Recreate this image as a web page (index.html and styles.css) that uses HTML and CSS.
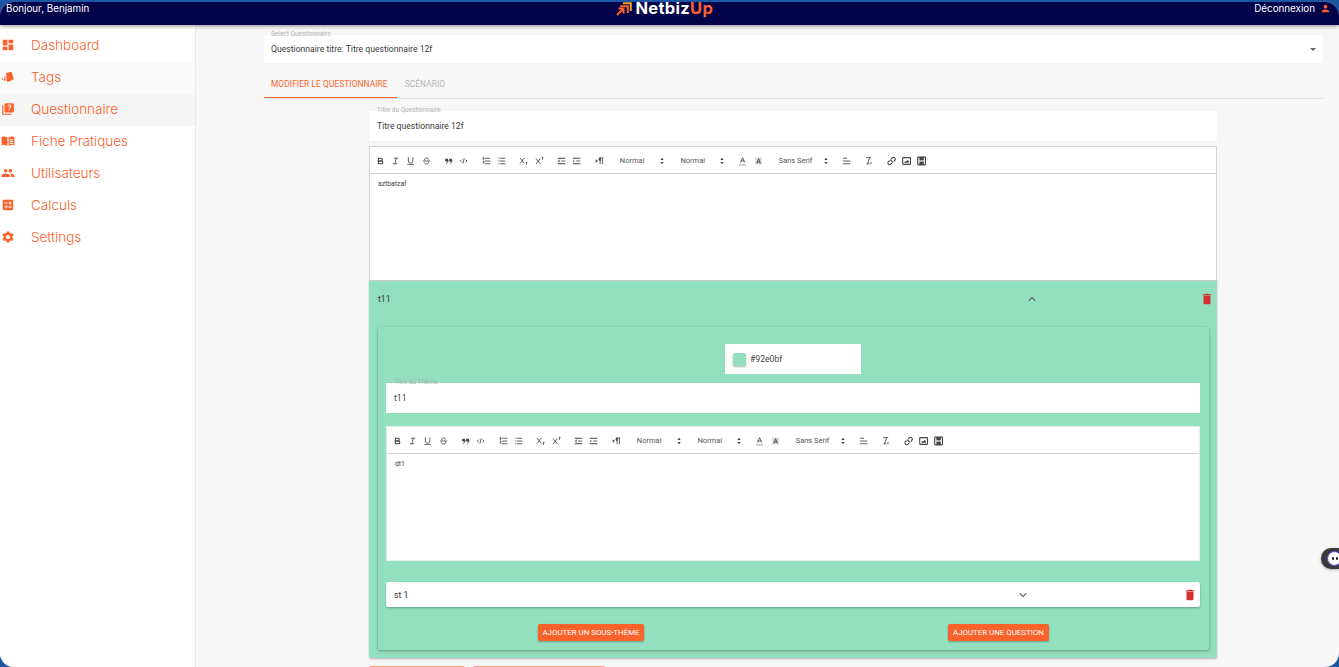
FILE: index.html
```html
<!DOCTYPE html>
<html lang="fr">
<head>
    <meta charset="UTF-8">
    <meta name="viewport" content="width=device-width, initial-scale=1.0">
    <title>NetbizUp</title>
    <link rel="stylesheet" href="styles.css">
</head>
<body>
    <svg class="sprites" width="0" height="0">
        <symbol id="q-bold" viewBox="0 0 18 18"><path class="st w2" d="M5,4H9.5a2.5,2.5,0,0,1,0,5H5V4Z"/><path class="st w2" d="M5,9h5.5a2.5,2.5,0,0,1,0,5H5V9Z"/></symbol>
        <symbol id="q-italic" viewBox="0 0 18 18"><line class="st" x1="7" x2="13" y1="4" y2="4"/><line class="st" x1="5" x2="11" y1="14" y2="14"/><line class="st" x1="8" x2="10" y1="14" y2="4"/></symbol>
        <symbol id="q-underline" viewBox="0 0 18 18"><path class="st" d="M5,3V9a4,4,0,0,0,8,0V3"/><rect class="fl" x="3" y="15" width="12" height="1.4" rx=".5"/></symbol>
        <symbol id="q-strike" viewBox="0 0 18 18"><line class="st" x1="3" x2="15" y1="9" y2="9"/><path class="st" d="M5.5,7C5,4.500,7,3.500,9,3.500c1.800,0,3.300,.8,3.700,2.300"/><path class="st" d="M12.600,11c.5,2.500-1.600,3.500-3.600,3.500-2,0-3.500-.9-3.900-2.400"/></symbol>
        <symbol id="q-quote" viewBox="0 0 18 18"><rect class="fl" x="3" y="5" width="5" height="5"/><rect class="fl" x="10" y="5" width="5" height="5"/><path class="st" d="M8,8c0,3-1,4.500-3,5.500"/><path class="st" d="M15,8c0,3-1,4.500-3,5.500"/></symbol>
        <symbol id="q-code" viewBox="0 0 18 18"><polyline class="st" points="5 7 3 9 5 11"/><polyline class="st" points="13 7 15 9 13 11"/><line class="st" x1="10" x2="8" y1="5" y2="13"/></symbol>
        <symbol id="q-ol" viewBox="0 0 18 18"><line class="st" x1="7" x2="15" y1="4" y2="4"/><line class="st" x1="7" x2="15" y1="9" y2="9"/><line class="st" x1="7" x2="15" y1="14" y2="14"/><line class="st" x1="2.500" x2="4.500" y1="5.500" y2="5.500"/><path class="st" d="M3.500,5.500V2.500H2.500"/><path class="st" d="M2.500,9.500c0-1,2-1,2,0,0,1-2,1.500-2,3h2.200"/></symbol>
        <symbol id="q-ul" viewBox="0 0 18 18"><line class="st" x1="6" x2="15" y1="4" y2="4"/><line class="st" x1="6" x2="15" y1="9" y2="9"/><line class="st" x1="6" x2="15" y1="14" y2="14"/><line class="st" x1="3" x2="3" y1="4" y2="4"/><line class="st" x1="3" x2="3" y1="9" y2="9"/><line class="st" x1="3" x2="3" y1="14" y2="14"/></symbol>
        <symbol id="q-sub" viewBox="0 0 18 18"><path class="st" d="M3,4l7,9M10,4l-7,9"/><path class="fl" d="M13,11h3v1.200h-1v3.800h-1.200v-3.800H13z"/></symbol>
        <symbol id="q-sup" viewBox="0 0 18 18"><path class="st" d="M3,5l7,9M10,5l-7,9"/><path class="fl" d="M13,2h3v1.200h-1v3.800h-1.200v-3.800H13z"/></symbol>
        <symbol id="q-outdent" viewBox="0 0 18 18"><line class="st w2" x1="3" x2="15" y1="14" y2="14"/><line class="st w2" x1="3" x2="15" y1="4" y2="4"/><line class="st" x1="9" x2="15" y1="9" y2="9"/><polyline class="st" points="6 7 3 9 6 11"/></symbol>
        <symbol id="q-indent" viewBox="0 0 18 18"><line class="st w2" x1="3" x2="15" y1="14" y2="14"/><line class="st w2" x1="3" x2="15" y1="4" y2="4"/><line class="st" x1="9" x2="15" y1="9" y2="9"/><polyline class="fl" points="3 7 3 11 6 9"/></symbol>
        <symbol id="q-rtl" viewBox="0 0 18 18"><polygon class="fl" points="2 6 2 12 6 9"/><line class="st" x1="10" x2="10" y1="4" y2="14"/><line class="st" x1="14" x2="14" y1="4" y2="14"/><path class="fl" d="M14,3H10A3,3,0,0,0,10,9h1V3z"/><line class="st" x1="9" x2="15" y1="3.500" y2="3.500"/></symbol>
        <symbol id="q-arrows" viewBox="0 0 18 18"><polygon class="fl" points="6 11 9 15 12 11"/><polygon class="fl" points="6 7 9 3 12 7"/></symbol>
        <symbol id="q-color" viewBox="0 0 18 18"><polyline class="st" points="5.500 11 9 3 12.500 11"/><line class="st" x1="11.600" x2="6.400" y1="9" y2="9"/><rect class="lt" x="3" y="15" width="12" height="2"/></symbol>
        <symbol id="q-background" viewBox="0 0 18 18"><rect class="lt" x="3" y="3" width="12" height="12" opacity=".5"/><polyline class="st" points="6 13 9 5 12 13"/><line class="st" x1="7" x2="11" y1="10.500" y2="10.500"/></symbol>
        <symbol id="q-align" viewBox="0 0 18 18"><line class="st" x1="3" x2="15" y1="9" y2="9"/><line class="st" x1="3" x2="15" y1="14" y2="14"/><line class="st" x1="3" x2="9" y1="4" y2="4"/></symbol>
        <symbol id="q-clean" viewBox="0 0 18 18"><line class="st" x1="5" x2="13" y1="3" y2="3"/><line class="st" x1="6" x2="9.400" y1="14" y2="14"/><line class="st" x1="11" x2="7" y1="3" y2="14"/><line class="lt-st" x1="11" x2="15" y1="11" y2="15"/><line class="lt-st" x1="15" x2="11" y1="11" y2="15"/></symbol>
        <symbol id="q-link" viewBox="0 0 18 18"><line class="st w2" x1="7" x2="11" y1="7" y2="11"/><path class="st w2" d="M8.900,4.600,10.300,3.200a2.900,2.900,0,0,1,4.300,.2,2.900,2.900,0,0,1,.2,4.300L13.400,9.100"/><path class="st w2" d="M9.100,13.400,7.700,14.800a2.900,2.900,0,0,1-4.300-.2,2.900,2.900,0,0,1-.2-4.300L4.600,8.900"/></symbol>
        <symbol id="q-image" viewBox="0 0 18 18"><rect class="st w2" x="2" y="3" width="14" height="12" rx="1"/><polyline class="fl" points="5 12 5 11 7 9 8 10 11 7 13 9 13 12 5 12"/></symbol>
        <symbol id="q-video" viewBox="0 0 18 18"><rect class="st w2" x="2" y="2" width="14" height="14" rx="1"/><rect class="fl" x="5" y="2" width="8" height="6"/><rect class="fl" x="5" y="10" width="8" height="6"/></symbol>
        <symbol id="m-delete" viewBox="0 0 24 24"><path d="M6 19c0 1.100.9 2 2 2h8c1.100 0 2-.9 2-2V7H6v12zM19 4h-3.500l-1-1h-5l-1 1H5v2h14V4z"/></symbol>
    </svg>

    <div class="app">
        <header class="topbar">
            <span class="topbar-text">Bonjour, Benjamin</span>
            <div class="logo">
                <svg class="logo-mark" viewBox="0 0 16 14"><path d="M7 1.200h7.800V9" fill="none" stroke="#f2a41f" stroke-width="2"/><path d="M4 4.200h7.800V11" fill="none" stroke="#f9622b" stroke-width="2"/><path d="M1 13l6.500-6.500M2.500 6.500h5v5" fill="none" stroke="#f9622b" stroke-width="2"/></svg>
                <span class="logo-text">Netbiz<span class="logo-up">Up</span></span>
            </div>
            <div class="logout">
                <span class="topbar-text">Déconnexion</span>
                <svg class="logout-icon" viewBox="0 0 24 24"><path d="M12 12c2.210 0 4-1.790 4-4s-1.790-4-4-4-4 1.790-4 4 1.790 4 4 4zm0 2c-2.670 0-8 1.340-8 4v2h16v-2c0-2.660-5.330-4-8-4z"/></svg>
            </div>
        </header>

        <div class="layout">
            <nav class="sidebar">
                <a class="nav-item">
                    <svg class="nav-icon" viewBox="0 0 24 24"><path d="M3 13h8V3H3v10zm0 8h8v-6H3v6zm10 0h8V11h-8v10zm0-18v6h8V3h-8z"/></svg>
                    Dashboard
                </a>
                <a class="nav-item nav-hover">
                    <svg class="nav-icon" viewBox="0 0 24 24"><path d="M9 5l9-2 4 13-9 4c-2 .5-3-.5-3.500-2z"/><path d="M7 8l1 11-3-1zM3 12l1.500 6L2 16.500z"/></svg>
                    Tags
                </a>
                <a class="nav-item nav-active">
                    <svg class="nav-icon" viewBox="0 0 24 24"><path fill-rule="evenodd" d="M4 6H2v14c0 1.100.9 2 2 2h14v-2H4V6zm16-4H8c-1.100 0-2 .9-2 2v12c0 1.100.9 2 2 2h12c1.100 0 2-.9 2-2V4c0-1.100-.9-2-2-2zm-7 12v-2h2v2h-2zm0-3c0-2 2.500-2.500 2.500-4 0-1.800-3-1.800-3 0H11c0-3.800 7-3.800 7 0 0 2.500-3 3-3 4h-2z"/></svg>
                    Questionnaire
                </a>
                <a class="nav-item">
                    <svg class="nav-icon" viewBox="0 0 24 24"><path fill-rule="evenodd" d="M1 5c3-1 7-1 10 .5V20c-3-1.500-7-1.500-10-.5V5zm12 .5C16 4 20 4 23 5v14.500c-3-1-7-1-10 .5V5.500zM15 9v1.500h6V9h-6zm0 3v1.500h6V12h-6zm0 3v1.500h6V15h-6z"/></svg>
                    Fiche Pratiques
                </a>
                <a class="nav-item">
                    <svg class="nav-icon" viewBox="0 0 24 24"><path d="M16 11c1.660 0 2.990-1.340 2.990-3S17.660 5 16 5c-1.660 0-3 1.340-3 3s1.340 3 3 3zm-8 0c1.660 0 2.990-1.340 2.990-3S9.660 5 8 5C6.340 5 5 6.340 5 8s1.340 3 3 3zm0 2c-2.330 0-7 1.170-7 3.500V19h14v-2.500c0-2.330-4.670-3.500-7-3.500zm8 0c-.29 0-.62.02-.97.05 1.160.84 1.970 1.970 1.970 3.450V19h6v-2.500c0-2.330-4.670-3.500-7-3.500z"/></svg>
                    Utilisateurs
                </a>
                <a class="nav-item">
                    <svg class="nav-icon" viewBox="0 0 24 24"><path d="M19 3H5c-1.100 0-2 .9-2 2v14c0 1.100.9 2 2 2h14c1.100 0 2-.9 2-2V5c0-1.100-.9-2-2-2zm-5.970 4.060L14.090 6l1.410 1.410L16.910 6l1.060 1.060-1.410 1.410 1.410 1.410-1.060 1.060-1.410-1.400-1.410 1.410-1.060-1.060 1.410-1.410-1.410-1.420zm-6.780.66h5v1.500h-5v-1.500zM11.500 16h-2v2H8v-2H6v-1.500h2v-2h1.500v2h2V16zm6.500 1.250h-5v-1.500h5v1.500zm0-2.500h-5v-1.500h5v1.500z"/></svg>
                    Calculs
                </a>
                <a class="nav-item">
                    <svg class="nav-icon" viewBox="0 0 24 24"><path d="M19.140 12.940c.04-.3.06-.61.06-.94 0-.32-.02-.64-.07-.94l2.030-1.580c.18-.14.23-.41.12-.61l-1.920-3.320c-.12-.22-.37-.29-.59-.22l-2.390.96c-.5-.38-1.030-.7-1.620-.94l-.36-2.540c-.04-.24-.24-.41-.48-.41h-3.840c-.24 0-.43.17-.47.41l-.36 2.540c-.59.24-1.130.57-1.620.94l-2.390-.96c-.22-.08-.47 0-.59.22L2.740 8.870c-.12.21-.08.47.12.61l2.030 1.580c-.05.3-.09.63-.09.94s.02.64.07.94l-2.030 1.580c-.18.14-.23.41-.12.61l1.920 3.320c.12.22.37.29.59.22l2.390-.96c.5.38 1.030.7 1.620.94l.36 2.540c.05.24.24.41.48.41h3.840c.24 0 .44-.17.47-.41l.36-2.540c.59-.24 1.130-.56 1.620-.94l2.390.96c.22.08.47 0 .59-.22l1.920-3.320c.12-.22.07-.47-.12-.61l-2.010-1.580zM12 15.600c-1.980 0-3.600-1.620-3.600-3.600s1.620-3.600 3.600-3.600 3.600 1.620 3.600 3.600-1.620 3.600-3.600 3.600z"/></svg>
                    Settings
                </a>
            </nav>

            <main class="content">
                <div class="field select-field">
                    <label class="field-label">Select Questionnaire</label>
                    <span>Questionnaire titre: Titre questionnaire 12f</span>
                    <span class="select-caret"></span>
                </div>

                <div class="tabs">
                    <span class="tab tab-active">Modifier le questionnaire</span>
                    <span class="tab">Scénario</span>
                </div>

                <div class="editor-col">
                    <div class="field title-field">
                        <label class="field-label">Titre du Questionnaire</label>
                        <span>Titre questionnaire 12f</span>
                    </div>

                    <div class="editor editor-main">
                        <div class="toolbar">
                            <span class="tb-group">
                                <svg class="tb"><use href="#q-bold"/></svg><svg class="tb"><use href="#q-italic"/></svg><svg class="tb"><use href="#q-underline"/></svg><svg class="tb"><use href="#q-strike"/></svg>
                            </span>
                            <span class="tb-group">
                                <svg class="tb"><use href="#q-quote"/></svg><svg class="tb"><use href="#q-code"/></svg>
                            </span>
                            <span class="tb-group">
                                <svg class="tb"><use href="#q-ol"/></svg><svg class="tb"><use href="#q-ul"/></svg>
                            </span>
                            <span class="tb-group">
                                <svg class="tb"><use href="#q-sub"/></svg><svg class="tb"><use href="#q-sup"/></svg>
                            </span>
                            <span class="tb-group">
                                <svg class="tb"><use href="#q-outdent"/></svg><svg class="tb"><use href="#q-indent"/></svg>
                            </span>
                            <span class="tb-group">
                                <svg class="tb"><use href="#q-rtl"/></svg>
                            </span>
                            <span class="tb-picker">Normal<svg class="tb-arrows"><use href="#q-arrows"/></svg></span>
                            <span class="tb-picker">Normal<svg class="tb-arrows"><use href="#q-arrows"/></svg></span>
                            <span class="tb-group">
                                <svg class="tb"><use href="#q-color"/></svg><svg class="tb"><use href="#q-background"/></svg>
                            </span>
                            <span class="tb-picker tb-picker-font">Sans Serif<svg class="tb-arrows"><use href="#q-arrows"/></svg></span>
                            <span class="tb-group">
                                <svg class="tb"><use href="#q-align"/></svg>
                            </span>
                            <span class="tb-group">
                                <svg class="tb"><use href="#q-clean"/></svg>
                            </span>
                            <span class="tb-group">
                                <svg class="tb"><use href="#q-link"/></svg><svg class="tb"><use href="#q-image"/></svg><svg class="tb"><use href="#q-video"/></svg>
                            </span>
                        </div>
                        <div class="editor-body">aztbatzaf</div>
                    </div>

                    <section class="accordion">
                        <div class="accordion-head">
                            <span class="accordion-title">t11</span>
                            <svg class="chevron" viewBox="0 0 24 24"><path d="M7.410 15.410 12 10.830l4.590 4.580L18 14l-6-6-6 6z"/></svg>
                            <svg class="trash"><use href="#m-delete"/></svg>
                        </div>

                        <div class="theme-card">
                            <div class="color-row">
                                <div class="color-input">
                                    <span class="color-swatch"></span>
                                    <span>#92e0bf</span>
                                </div>
                            </div>

                            <div class="field theme-field">
                                <label class="field-label">Titre du Thème</label>
                                <span>t11</span>
                            </div>

                            <div class="editor editor-theme">
                                <div class="toolbar">
                                    <span class="tb-group">
                                        <svg class="tb"><use href="#q-bold"/></svg><svg class="tb"><use href="#q-italic"/></svg><svg class="tb"><use href="#q-underline"/></svg><svg class="tb"><use href="#q-strike"/></svg>
                                    </span>
                                    <span class="tb-group">
                                        <svg class="tb"><use href="#q-quote"/></svg><svg class="tb"><use href="#q-code"/></svg>
                                    </span>
                                    <span class="tb-group">
                                        <svg class="tb"><use href="#q-ol"/></svg><svg class="tb"><use href="#q-ul"/></svg>
                                    </span>
                                    <span class="tb-group">
                                        <svg class="tb"><use href="#q-sub"/></svg><svg class="tb"><use href="#q-sup"/></svg>
                                    </span>
                                    <span class="tb-group">
                                        <svg class="tb"><use href="#q-outdent"/></svg><svg class="tb"><use href="#q-indent"/></svg>
                                    </span>
                                    <span class="tb-group">
                                        <svg class="tb"><use href="#q-rtl"/></svg>
                                    </span>
                                    <span class="tb-picker">Normal<svg class="tb-arrows"><use href="#q-arrows"/></svg></span>
                                    <span class="tb-picker">Normal<svg class="tb-arrows"><use href="#q-arrows"/></svg></span>
                                    <span class="tb-group">
                                        <svg class="tb"><use href="#q-color"/></svg><svg class="tb"><use href="#q-background"/></svg>
                                    </span>
                                    <span class="tb-picker tb-picker-font">Sans Serif<svg class="tb-arrows"><use href="#q-arrows"/></svg></span>
                                    <span class="tb-group">
                                        <svg class="tb"><use href="#q-align"/></svg>
                                    </span>
                                    <span class="tb-group">
                                        <svg class="tb"><use href="#q-clean"/></svg>
                                    </span>
                                    <span class="tb-group">
                                        <svg class="tb"><use href="#q-link"/></svg><svg class="tb"><use href="#q-image"/></svg><svg class="tb"><use href="#q-video"/></svg>
                                    </span>
                                </div>
                                <div class="editor-body">dt1</div>
                            </div>

                            <div class="subtheme">
                                <span class="subtheme-title">st 1</span>
                                <svg class="chevron" viewBox="0 0 24 24"><path d="M16.590 8.590 12 13.170 7.410 8.590 6 10l6 6 6-6z"/></svg>
                                <svg class="trash"><use href="#m-delete"/></svg>
                            </div>

                            <div class="theme-actions">
                                <button class="btn btn-subtheme">Ajouter un sous-thème</button>
                                <button class="btn btn-question">Ajouter une question</button>
                            </div>
                        </div>
                    </section>

                    <div class="page-actions">
                        <span class="btn-faded btn-save"></span>
                        <span class="btn-faded btn-theme"></span>
                    </div>
                </div>
            </main>
        </div>

        <div class="chat-widget">
            <span class="chat-bot"><span class="chat-eye"></span><span class="chat-eye"></span></span>
        </div>
    </div>
</body>
</html>
```

FILE: styles.css
```css
html, body { margin: 0; padding: 0; height: 100%; overflow: hidden; }
body { background: #1c57a5; font-family: "Roboto", "Liberation Sans", sans-serif; color: #333; }
.sprites { position: absolute; }

.app { position: relative; height: 665px; margin-top: 2px; background: #f7f7f7; border-radius: 14px; overflow: hidden; display: flex; flex-direction: column; }

/* top bar */
.topbar { flex: 0 0 23px; background: #03034a; box-shadow: 0 1px 4px rgba(0, 0, 0, 0.45); display: flex; justify-content: space-between; align-items: flex-start; padding: 0 6px; position: relative; z-index: 2; }
.topbar-text { font-family: "Inter", "Liberation Sans", sans-serif; font-size: 9.8px; line-height: 13px; color: #fff; }
.logo { display: flex; align-items: flex-start; gap: 3px; margin-left: -14px; }
.logo-mark { width: 16px; height: 14px; }
.logo-text { font-family: "Inter", "Liberation Sans", sans-serif; font-weight: 700; font-size: 16.5px; line-height: 14px; letter-spacing: 0.3px; margin-top: -1px; color: #fff; }
.logo-up { color: #f9622b; }
.logout { display: flex; align-items: center; gap: 5px; margin-right: 2px; }
.logout-icon { width: 11px; height: 11px; fill: #f9622b; }

.layout { flex: 1; display: flex; min-height: 0; }

/* sidebar */
.sidebar { width: 195px; background: #fff; border-right: 1px solid #e8e8e8; padding-top: 5px; flex-shrink: 0; }
.nav-item { display: flex; align-items: center; box-sizing: border-box; height: 32px; padding: 0 0 2px 1px; gap: 16px; font-family: "Inter", "Liberation Sans", sans-serif; font-size: 13.5px; font-weight: 300; color: #f9622b; }
.nav-hover { background: #fafafa; }
.nav-active { background: #f5f5f5; }
.nav-icon { width: 14px; height: 14px; fill: #f9622b; flex-shrink: 0; }

/* main column */
.content { flex: 1; padding: 10px 16px 0 68px; min-width: 0; }
.field { position: relative; background: #fff; box-sizing: border-box; display: flex; align-items: center; font-size: 8.65px; color: #3c3c3c; padding: 0 8px; box-shadow: 0 0 1px rgba(0, 0, 0, 0.08); }
.field-label { position: absolute; left: 8px; top: -4px; font-size: 6.5px; line-height: 7px; color: #b3b3b3; }
.select-field { height: 28px; padding: 0 7px; justify-content: space-between; }
.select-field .field-label { left: 7px; }
.select-caret { width: 0; height: 0; border-left: 3px solid transparent; border-right: 3px solid transparent; border-top: 3px solid #666; }

.tabs { display: flex; height: 28px; margin-top: 7px; border-bottom: 1px solid #e0e0e0; }
.tab { box-sizing: border-box; padding: 1px 8px 0; height: 28px; line-height: 27px; font-size: 8.3px; letter-spacing: 0.12px; text-transform: uppercase; color: #b5b5b5; }
.tab-active { color: #f9622b; border-bottom: 1px solid #f9622b; padding: 1px 9px 0 7px; }

.editor-col { width: 848px; margin: 12px 0 0 105px; }
.title-field { height: 30px; margin-bottom: 5px; }

/* quill style editor */
.editor { background: #fff; box-sizing: border-box; }
.editor-main { height: 134px; border: 1px solid #d4d4d4; border-bottom: none; }
.editor-theme { height: 135px; border: 1px solid #e3f3ec; margin-top: 13px; }
.toolbar { height: 27px; box-sizing: border-box; border-bottom: 1px solid #d4d4d4; display: flex; align-items: center; padding: 1px 0 0 3px; }
.tb-group { display: flex; margin-right: 7.3px; }
.tb { width: 15.2px; height: 10px; }
.tb-picker { display: flex; align-items: center; justify-content: space-between; width: 47px; margin-right: 8px; padding-left: 5.6px; font-size: 7.5px; color: #555; }
.tb-picker-font { width: 52px; }
.tb-arrows { width: 10px; height: 10px; }
.st { fill: none; stroke: #444; stroke-width: 1.5; stroke-linecap: round; stroke-linejoin: round; }
.w2 { stroke-width: 2; }
.fl { fill: #444; }
.lt { fill: #aaa; }
.lt-st { stroke: #444; stroke-width: 1; }
.editor-body { padding: 6px 8px; font-size: 6.8px; line-height: 9px; color: #444; }

/* theme accordion */
.accordion { background: #92e0bf; height: 378px; border-top: 1px solid #c9c9c9; border-radius: 0 0 2px 2px; box-sizing: border-box; box-shadow: 0 1px 2px rgba(0, 0, 0, 0.25); padding: 0 8px 8px 9px; }
.accordion-head { height: 35px; margin-bottom: 11px; display: flex; align-items: center; }
.accordion-title { width: 647px; font-size: 8.65px; color: #333; }
.chevron { width: 14px; height: 14px; fill: #555; }
.trash { width: 14px; height: 14px; fill: #d32f2f; margin-left: auto; margin-right: -5px; }
.theme-card { background: #92e0bf; border-radius: 2px; box-sizing: border-box; height: 323px; padding: 17px 9px 0 8px; box-shadow: 0 1px 3px rgba(0, 0, 0, 0.35); }
.color-row { display: flex; justify-content: center; }
.color-input { width: 136px; height: 30px; box-sizing: border-box; background: #fff; display: flex; align-items: center; gap: 4px; padding-left: 8px; font-size: 8.65px; color: #444; }
.color-swatch { width: 13px; height: 13px; border-radius: 2px; background: #92e0bf; box-shadow: 0 1px 2px rgba(0, 0, 0, 0.3); }
.theme-field { height: 30px; margin-top: 9px; }

.subtheme { height: 25px; margin-top: 21px; background: #fff; border-radius: 2px; box-shadow: 0 1px 2px rgba(0, 0, 0, 0.3); display: flex; align-items: center; padding: 0 8px; }
.subtheme-title { width: 622px; font-size: 8.65px; color: #333; }

.theme-actions { display: flex; margin-top: 17px; padding-left: 152px; }
.btn { border: none; height: 17px; padding: 0; background: #f9622b; color: #fff; border-radius: 2px; font-family: "Roboto", "Liberation Sans", sans-serif; font-size: 7.9px; text-transform: uppercase; box-shadow: 0 1px 2px rgba(0, 0, 0, 0.3); }
.btn-subtheme { width: 106px; }
.btn-question { width: 101px; margin-left: 304px; }
.page-actions { display: flex; gap: 8px; margin-top: 8px; }
.btn-faded { height: 17px; background: #f9622b; border-radius: 2px; opacity: 0.6; }
.btn-save { width: 96px; }
.btn-theme { width: 132px; }

/* floating chat widget */
.chat-widget { position: absolute; right: 0; top: 546px; width: 18px; height: 21px; background: #3a3a3c; border-radius: 10px 0 0 10px; box-shadow: 0 1px 3px rgba(0, 0, 0, 0.3); display: flex; align-items: center; overflow: hidden; }
.chat-bot { margin-left: 6px; flex-shrink: 0; width: 13px; height: 13px; border-radius: 50%; background: #fff; border: 1px solid #5b3fe0; display: flex; align-items: center; justify-content: center; gap: 2px; }
.chat-eye { width: 2px; height: 3px; background: #222; border-radius: 1px; }
```
